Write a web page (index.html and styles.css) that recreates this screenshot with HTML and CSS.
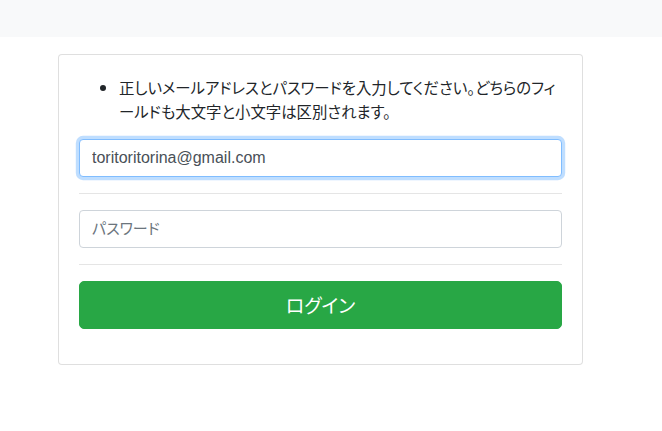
FILE: index.html
```html
<!DOCTYPE html>
<html lang="ja">
<head>
<meta charset="utf-8">
<title>ログイン</title>
<link rel="stylesheet" href="styles.css">
</head>
<body>
<header class="topbar"></header>
<main class="wrap">
  <div class="card">
    <div class="card-body">
      <ul class="notes">
        <li>正しいメールアドレスとパスワードを入力してください。どちらのフィールドも大文字と小文字は区別されます。</li>
      </ul>
      <form class="login-form">
        <input class="field field-focus" type="email" value="toritoritorina@gmail.com">
        <hr class="sep">
        <input class="field" type="password" placeholder="パスワード">
        <hr class="sep">
        <button class="btn-login" type="button">ログイン</button>
      </form>
    </div>
  </div>
</main>
</body>
</html>
```

FILE: styles.css
```css
* { box-sizing: border-box; }
html, body { margin: 0; padding: 0; background: #fff; }
body {
  font-family: "Liberation Sans", "Noto Sans CJK JP", sans-serif;
  font-size: 16px;
  color: #212529;
}
.topbar {
  height: 37px;
  background: #f8f9fa;
}
.wrap {
  padding: 17px 0 0 58px;
}
.card {
  width: 525px;
  border: 1px solid rgba(0,0,0,.125);
  border-radius: 4px;
  background: #fff;
}
.card-body {
  padding: 20px 20px 35px;
}
.notes {
  margin: 0 0 16px;
  padding-left: 40px;
  font-family: "Noto Sans CJK JP", sans-serif;
  font-size: 15.4px;
  line-height: 24px;
  font-feature-settings: "palt";
}
.login-form { display: flex; flex-direction: column; }
.field {
  display: block;
  width: 100%;
  height: 38px;
  padding: 6px 12px;
  font-family: "Liberation Sans", "Noto Sans CJK JP", sans-serif;
  font-size: 16px;
  line-height: 24px;
  color: #495057;
  background: #fff;
  border: 1px solid #ced4da;
  border-radius: 4px;
  outline: none;
}
.field::placeholder {
  color: #6c757d;
  font-family: "Noto Sans CJK JP", sans-serif;
  font-size: 15px;
  font-feature-settings: "palt";
}
.field-focus {
  border-color: #80bdff;
  box-shadow: 0 0 0 3.2px rgba(0,123,255,.25);
}
.sep {
  width: 100%;
  margin: 16px 0;
  border: 0;
  border-top: 1px solid rgba(0,0,0,.1);
}
.btn-login {
  display: block;
  width: 100%;
  height: 48px;
  padding: 8px 16px;
  font-family: "Noto Sans CJK JP", sans-serif;
  font-size: 19px;
  line-height: 30px;
  font-feature-settings: "palt";
  color: #fff;
  background: #28a745;
  border: 1px solid #28a745;
  border-radius: 5px;
}
```
